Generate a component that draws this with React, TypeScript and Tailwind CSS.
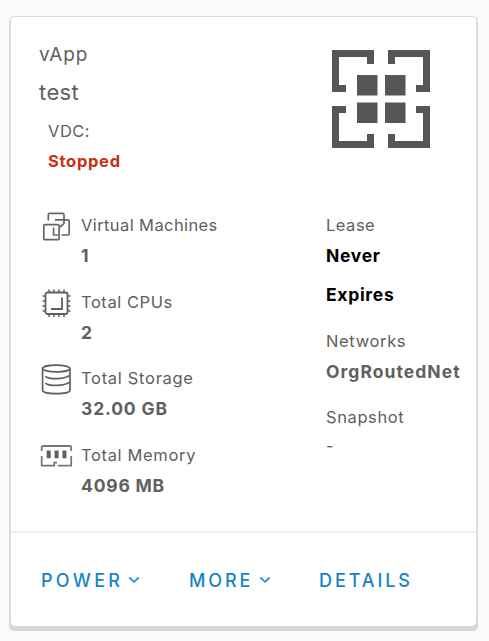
import type { ReactNode } from "react";

function VmIcon() {
  return (
    <svg width="32" height="32" viewBox="0 0 32 32" fill="none" stroke="#666" strokeWidth="1.7">
      <path d="M8.300 10.500V4.500Q8.300 3.300 9.500 3.300H22.500Q24 3.300 24 4.800V14" />
      <path d="M15 9.800H27.800Q29.200 9.800 29.200 11.200V23.500Q29.200 25 27.800 25H21.500" />
      <rect x="3.800" y="14.700" width="15.300" height="15" rx="1" />
      <path d="M13.600 17.500V25H18.500M23.500 14L20 17" />
    </svg>
  );
}

function CpuIcon() {
  return (
    <svg width="32" height="32" viewBox="0 0 32 32" fill="none" stroke="#606060" strokeWidth="1.8">
      <rect x="5.500" y="5.500" width="22" height="21.500" rx="2" />
      <path d="M9 5.500V2.500M14 5.500V2.500M19 5.500V2.500M24 5.500V2.500M9 30V27M14 30V27M19 30V27M24 30V27M5.500 9H2.500M5.500 14H2.500M5.500 19H2.500M5.500 24H2.500M27.500 9H30.500M27.500 14H30.500M27.500 19H30.500M27.500 24H30.500" strokeWidth="1.5" />
      <path d="M22 10.500V22H11" />
    </svg>
  );
}

function StorageIcon() {
  return (
    <svg width="32" height="32" viewBox="0 0 32 32" fill="none" stroke="#606060" strokeWidth="1.7">
      <ellipse cx="16.300" cy="5.500" rx="13.700" ry="3.400" />
      <path d="M2.600 5.500V27.300C2.600 31.800 30 31.800 30 27.300V5.500M5.300 13.500C10 16.500 23 16.500 29.800 12.500M5.300 20.300C10 23.300 23 23.300 29.800 19.300" />
    </svg>
  );
}

function MemoryIcon() {
  return (
    <svg width="33" height="32" viewBox="0 0 33 32" fill="none" stroke="#777" strokeWidth="1.8">
      <path d="M1.700 11V7.500Q1.700 6 3.200 6H29.700Q31.200 6 31.200 7.500V11M1.700 16V25.600H13.300M14.200 26.400V22.600H17M17.800 25.600H31.200V16" />
      <path d="M8.700 10.500V18.300M16.600 10.500V18.300M24.400 10.500V18.300" strokeWidth="4" stroke="#606060" />
    </svg>
  );
}

function VAppLogo() {
  return (
    <svg className="mt-[33px] ml-[5px]" width="98" height="98" viewBox="0 0 98 98">
      <path
        d="M3.500 42V3.500H38.500V14M3.500 38.500H14M59.500 14V3.500H94.500V38.500H84M3.500 59.500H14M3.500 56V94.500H38.500V84M84 59.500H94.500V94.500H59.500V84"
        fill="none"
        stroke="#565656"
        strokeWidth="7"
      />
      <path d="M35 0h7v7h-7zM35 91h7v7h-7zM56 0h7v7h-7zM56 91h7v7h-7zM91 35h7v7h-7zM91 56h7v7h-7z" fill="#565656" />
      <path d="M25 25h20.500v20.500H25zM53 25h20.500v20.500H53zM25 52.500h20.500V73H25zM53 52.500h20.500V73H53z" fill="#565656" />
    </svg>
  );
}

function Stat({ icon, label, value, labelClass, valueClass }: {
  icon: ReactNode; label: string; value: string; labelClass: string; valueClass: string;
}) {
  return (
    <div className="flex h-[76.5px]">
      <div className="w-[41px] shrink-0">{icon}</div>
      <div>
        <div className="h-[30px] text-[16.5px] leading-[30px]"><span className={labelClass}>{label}</span></div>
        <div className="h-[33px] text-[17.5px] leading-[32px] font-bold"><span className={valueClass}>{value}</span></div>
      </div>
    </div>
  );
}

function Chevron() {
  return (
    <svg width="12" height="8" viewBox="0 0 12 8" fill="none" stroke="#2b92cf" strokeWidth="1.8">
      <path d="M1.300 1.500L6 5.800L10.700 1.500" />
    </svg>
  );
}

export default function App() {
  return (
    <div className="h-[641px] w-[489px] overflow-hidden bg-[#fafafa] pt-[16px] pl-[9px] font-['Inter',sans-serif] whitespace-nowrap text-[#606060]">
      <main className="h-[610px] w-[469px] rounded-[5px] border-x-2 border-t border-[#dcdcdc] bg-white shadow-[0_5px_0_#d7d7d7]">
        <header className="flex h-[193px] justify-between pr-[46px] pl-[28px]">
          <div className="pt-[22px]">
            <div className="h-[34px] text-[19px] leading-[32px] tracking-[0.9px]">vApp</div>
            <div className="h-[40px] text-[22px] leading-[39px] tracking-[0.4px]">test</div>
            <div className="h-[30px] pl-[9px] text-[16.5px] leading-[36px] tracking-[0.5px]">VDC:</div>
            <div className="h-[30px] pl-[9px] text-[16.5px] leading-[36px] font-bold tracking-[0.7px] text-[#c92f12]">Stopped</div>
          </div>
          <VAppLogo />
        </header>
        <section className="flex h-[321px] pl-[29px]">
          <div className="w-[286px]">
            <Stat icon={<VmIcon />} label="Virtual Machines" value="1" labelClass="tracking-[0.4px]" valueClass="" />
            <Stat icon={<CpuIcon />} label="Total CPUs" value="2" labelClass="tracking-[0.55px]" valueClass="" />
            <Stat icon={<StorageIcon />} label="Total Storage" value="32.00 GB" labelClass="tracking-[0.7px]" valueClass="tracking-[0.85px]" />
            <Stat icon={<MemoryIcon />} label="Total Memory" value="4096 MB" labelClass="tracking-[0.65px]" valueClass="tracking-[0.8px]" />
          </div>
          <div className="text-[16.5px]">
            <div className="h-[30px] leading-[30px] tracking-[0.5px]">Lease</div>
            <div className="h-[39px] text-[17.5px] leading-[32px] font-bold tracking-[0.7px] text-black">Never</div>
            <div className="h-[46.5px] text-[17.5px] leading-[32px] font-bold tracking-[0.7px] text-black">Expires</div>
            <div className="h-[30px] leading-[30px] tracking-[0.65px]">Networks</div>
            <div className="h-[46.5px] text-[17.5px] leading-[31px] font-bold tracking-[1.050px]">OrgRoutedNet</div>
            <div className="h-[30px] leading-[30px] tracking-[0.6px]">Snapshot</div>
            <div className="leading-[28px]">-</div>
          </div>
        </section>
        <footer className="flex h-[95px] items-center border-t-2 border-[#eee] pt-px pl-[30px] text-[18px] font-medium text-[#1684c7]">
          <button className="flex w-[148px] items-center gap-[5px]"><span className="tracking-[3.300px]">POWER</span><Chevron /></button>
          <button className="flex w-[130px] items-center gap-[6px]"><span className="tracking-[2.900px]">MORE</span><Chevron /></button>
          <button className="tracking-[2.9px]">DETAILS</button>
        </footer>
      </main>
    </div>
  );
}
